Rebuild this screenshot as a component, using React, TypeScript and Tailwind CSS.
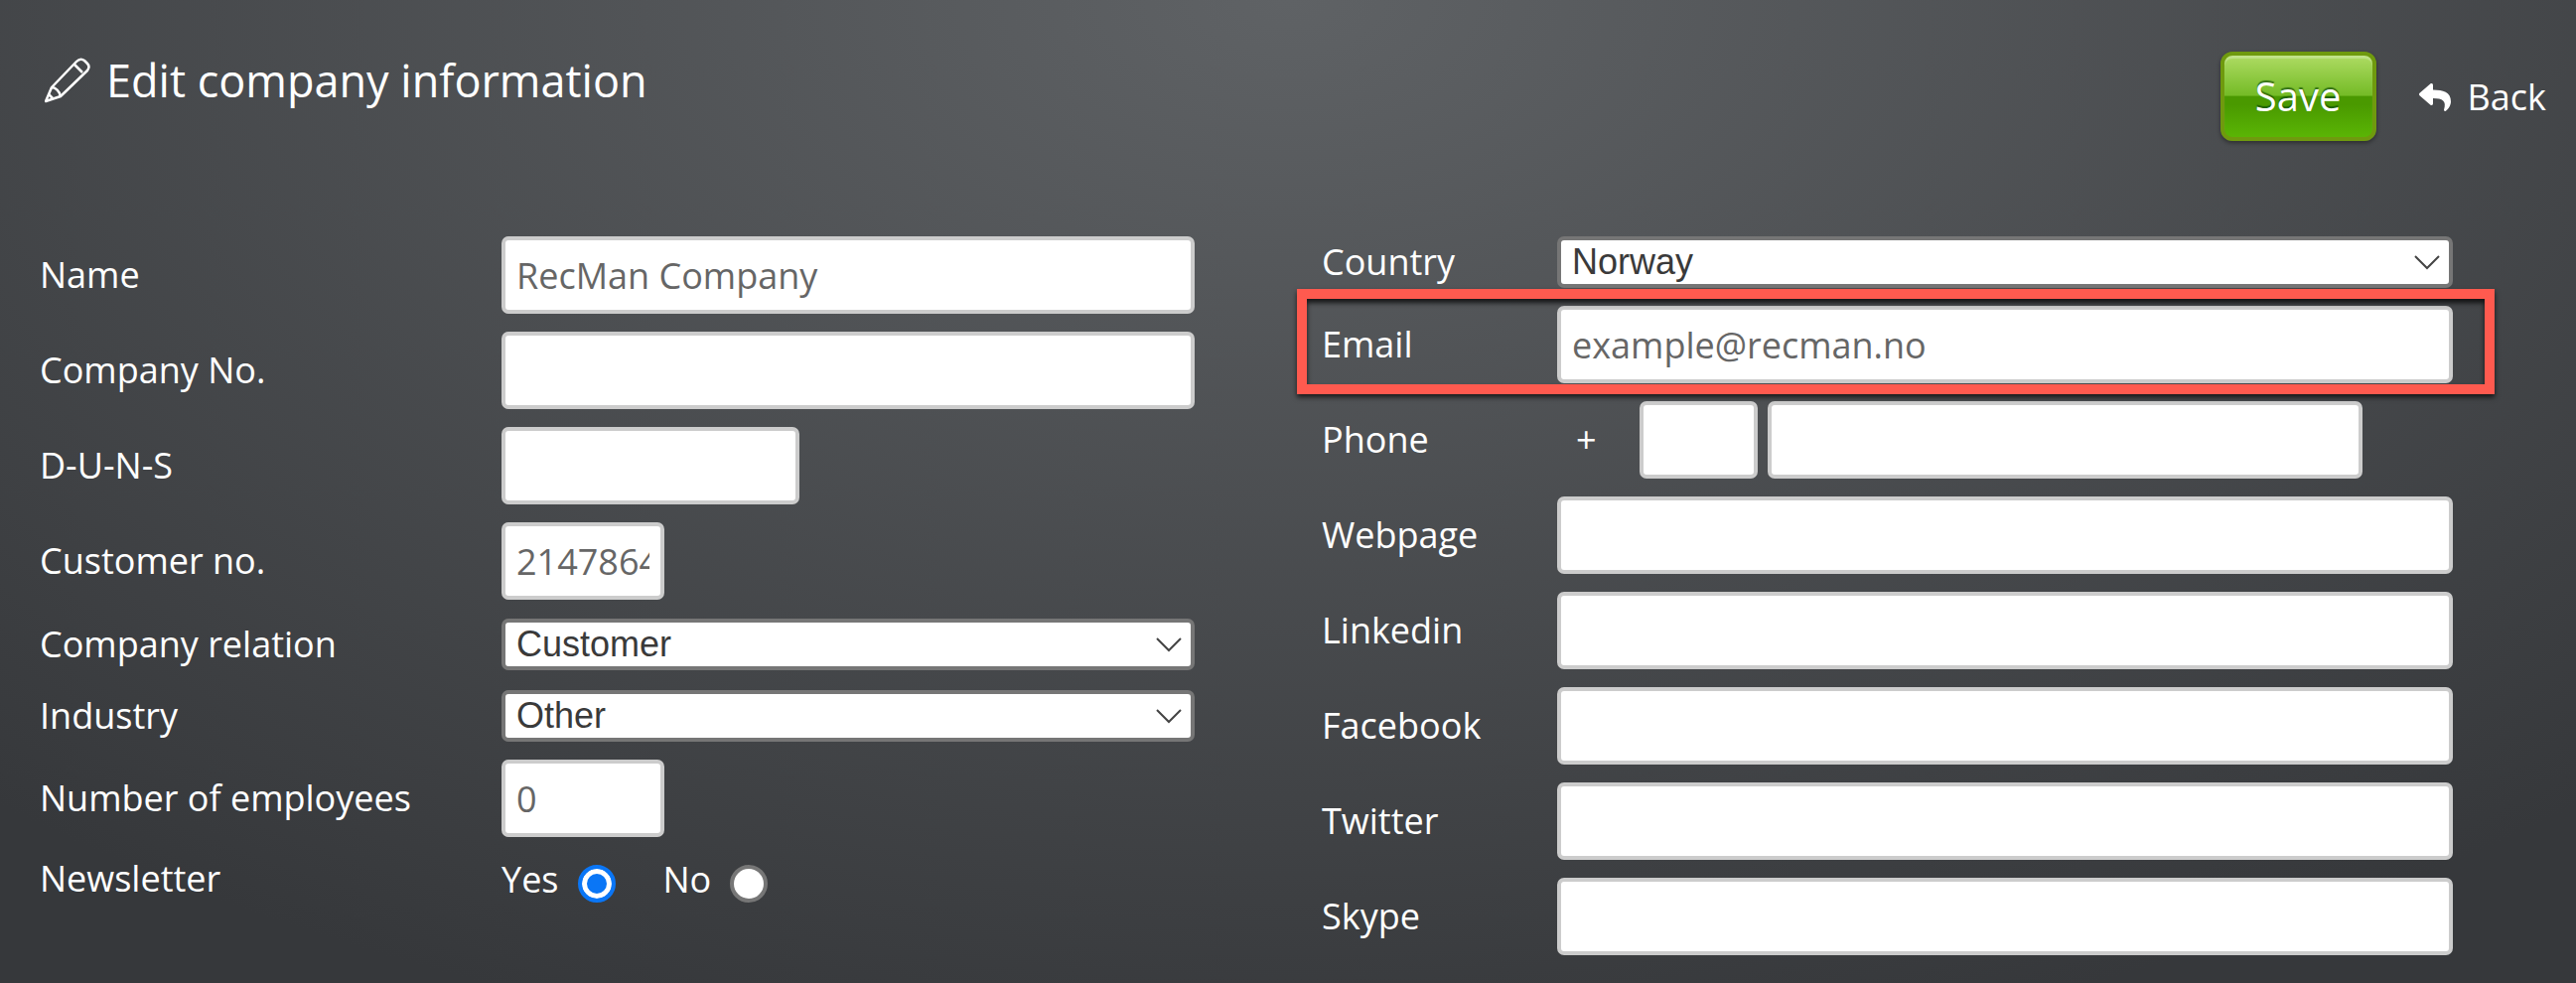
import { FaReply } from "react-icons/fa";

const inputCls =
  "block h-[78px] border-4 border-[#cccccc] rounded-[7px] bg-white px-[11px] text-[36px] text-[#666666] outline-none";

function Label({ children, className = "" }: { children: React.ReactNode; className?: string }) {
  return <label className={`text-[36px] leading-[50px] text-white ${className}`}>{children}</label>;
}

function Input({ width, value = "" }: { width: string; value?: string }) {
  return <input readOnly value={value} className={`${inputCls} ${width}`} />;
}

function Select({ value, width }: { value: string; width: string }) {
  return (
    <div className={`relative ${width}`}>
      <select
        defaultValue={value}
        className="block w-full h-[52px] appearance-none border-4 border-[#767676] rounded-[7px] bg-white pl-[11px] text-[36px] leading-[44px] text-[#3a3a3a] outline-none font-['Liberation_Sans',sans-serif]"
      >
        <option>{value}</option>
      </select>
      <svg
        className="absolute right-[13px] top-[19px] pointer-events-none"
        width="26"
        height="15"
        viewBox="0 0 26 15"
        fill="none"
        stroke="#444444"
        strokeWidth="2"
      >
        <path d="M1 1l12 12L25 1" />
      </svg>
    </div>
  );
}

function Row({ label, children, className = "" }: { label: string; children: React.ReactNode; className?: string }) {
  return (
    <div className={`flex items-center ${className}`}>
      <Label className="w-[465px] shrink-0">{label}</Label>
      {children}
    </div>
  );
}

function RightRow({ label, children, className = "" }: { label: string; children: React.ReactNode; className?: string }) {
  return (
    <div className={`flex items-center ${className}`}>
      <Label className="w-[237px] shrink-0">{label}</Label>
      {children}
    </div>
  );
}

function Radio({ name, checked }: { name: string; checked?: boolean }) {
  return (
    <input
      type="radio"
      name={name}
      defaultChecked={checked}
      className="block appearance-none w-[38px] h-[38px] rounded-full bg-white border-4 border-[#767676] checked:border-[#0a76f6] checked:bg-[#0a76f6] checked:shadow-[inset_0_0_0_5px_white]"
    />
  );
}

export default function App() {
  return (
    <div className="w-[2594px] h-[990px] overflow-hidden font-['Open_Sans',sans-serif] bg-[radial-gradient(ellipse_75%_110%_at_50%_0%,#5f6265_0%,#36383b_100%)]">
      <div className="flex justify-between pl-[45px] pr-[30px] pt-[52px] h-[238px]">
        <div className="flex items-start">
          <svg className="mt-[6px]" width="46" height="46" viewBox="0 0 46 46" fill="none" stroke="white" strokeWidth="2.5" strokeLinejoin="round">
            <path d="M1 44l6-14L32 4q4-4 8-1l3 3q3 3 0 7L16 39z" />
            <path d="M7 30c4 0 8 4 9 9M30 7l8 8M4 37l4 4" />
          </svg>
          <h1 className="ml-[16px] text-[45px] leading-[60px] text-white font-normal -mt-[1px]">Edit company information</h1>
        </div>
        <div className="flex items-start">
          <button className="w-[157px] h-[90px] rounded-[12px] border-4 border-[#6f9a0e] text-[40px] text-white [text-shadow:0_-2px_1px_rgba(0,60,0,0.6)] shadow-[0_2px_4px_rgba(0,0,0,0.4),inset_0_3px_1px_rgba(255,255,255,0.25)] bg-[linear-gradient(#aedb63_0%,#74bb26_49%,#4a9900_50%,#4a9900_60%,#5ab505_100%)]">
            Save
          </button>
          <div className="ml-[41px] mt-[24px] flex items-center text-[36px] leading-[44px] text-white">
            <FaReply className="w-[36px] h-[32px]" />
            <span className="ml-[15px]">Back</span>
          </div>
        </div>
      </div>

      <div className="flex items-start">
        <div className="ml-[40px] w-[1163px] flex flex-col">
          <Row label="Name"><Input width="w-[698px]" value="RecMan Company" /></Row>
          <Row label="Company No." className="mt-[18px]"><Input width="w-[698px]" /></Row>
          <Row label="D-U-N-S" className="mt-[18px]"><Input width="w-[300px]" /></Row>
          <Row label="Customer no." className="mt-[18px]"><Input width="w-[164px]" value="21478648" /></Row>
          <Row label="Company relation" className="mt-[19px]"><Select value="Customer" width="w-[698px]" /></Row>
          <Row label="Industry" className="mt-[20px]"><Select value="Other" width="w-[698px]" /></Row>
          <Row label="Number of employees" className="mt-[18px]"><Input width="w-[164px]" value="0" /></Row>
          <div className="flex items-center mt-[26px]">
            <Label className="w-[465px] shrink-0 -mt-[10px]">Newsletter</Label>
            <Label className="-mt-[8px]">Yes</Label>
            <div className="ml-[19px]"><Radio name="newsletter" checked /></div>
            <Label className="ml-[48px] -mt-[8px]">No</Label>
            <div className="ml-[19px]"><Radio name="newsletter" /></div>
          </div>
        </div>

        <div className="ml-[128px] w-[1139px] flex flex-col">
          <RightRow label="Country"><Select value="Norway" width="w-[902px]" /></RightRow>
          <div className="relative mt-[18px]">
            <RightRow label="Email"><Input width="w-[902px]" value="example@recman.no" /></RightRow>
            <div className="absolute -left-[25px] -top-[17px] w-[1206px] h-[106px] border-[10px] border-[#ff5a4f] shadow-[0_3px_5px_rgba(0,0,0,0.7),inset_0_4px_5px_rgba(0,0,0,0.75)] pointer-events-none" />
          </div>
          <RightRow label="Phone" className="mt-[18px]">
            <span className="w-[83px] pl-[19px] text-[36px] text-white">+</span>
            <Input width="w-[119px]" />
            <div className="ml-[10px]"><Input width="w-[599px]" /></div>
          </RightRow>
          {["Webpage", "Linkedin", "Facebook", "Twitter", "Skype"].map((l) => (
            <RightRow key={l} label={l} className="mt-[18px]">
              <Input width="w-[902px]" />
            </RightRow>
          ))}
        </div>
      </div>
    </div>
  );
}
